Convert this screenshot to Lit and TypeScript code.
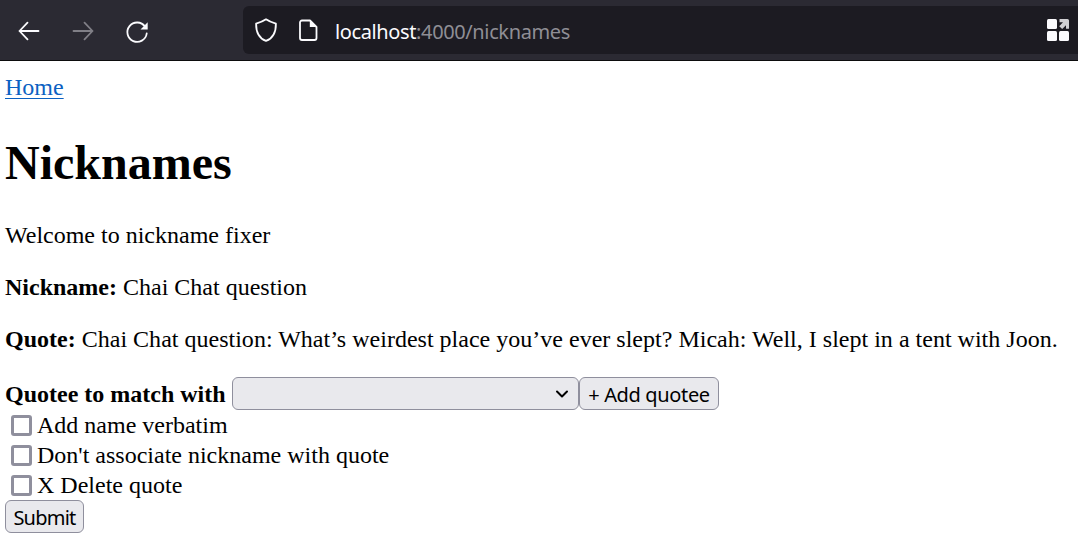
import { LitElement, html, css, svg } from "lit";
import { customElement } from "lit/decorators.js";

@customElement("browser-bar")
class BrowserBar extends LitElement {
  static styles = css`
    :host {
      display: flex;
      box-sizing: border-box;
      height: 61px;
      background: #2b2a33;
      border-bottom: 1px solid #0c0c0d;
    }
    svg {
      display: block;
      flex: none;
      overflow: visible;
      fill: none;
      stroke: #fbfbfe;
      stroke-width: 1.8;
      stroke-linecap: round;
      stroke-linejoin: round;
    }
    .nav {
      display: flex;
      width: 243px;
      box-sizing: border-box;
      flex: none;
      align-items: center;
      gap: 30px;
      padding: 2px 0 0 17px;
    }
    .muted {
      stroke: #807f87;
    }
    .solid {
      fill: #fbfbfe;
      stroke: none;
    }
    .soft {
      fill: #d0d0d3;
      stroke: none;
    }
    .field {
      display: flex;
      flex: 1;
      box-sizing: border-box;
      height: 48px;
      margin-top: 6px;
      padding: 0 9px 0 11px;
      align-items: center;
      background: #1c1b22;
      border-radius: 6px 0 0 6px;
    }
    .page {
      margin-left: 18px;
    }
    .url {
      flex: 1;
      margin-left: 15px;
      padding-top: 3px;
      font: 20px/28px "Noto Sans", sans-serif;
      letter-spacing: -0.38px;
      color: #8f8e95;
      white-space: nowrap;
    }
    .host {
      color: #fbfbfe;
    }
  `;

  render() {
    return html`
      <div class="nav">
        <svg width="24" height="24">${svg`<path d="M21.500 12H2.500M10.500 3.700L2.500 12l8 8.300"/>`}</svg>
        <svg class="muted" width="24" height="24">${svg`<path d="M2.500 12H21.500M13.500 3.700L21.500 12l-8 8.300"/>`}</svg>
        <svg width="24" height="24">${svg`<path d="M20 7.600A9.700 9.700 0 1 0 21.700 14.500"/><path class="solid" d="M22.700 3.200v7.200h-7.200z"/>`}</svg>
      </div>
      <div class="field">
        <svg width="24" height="24">${svg`<path d="M12 1.300c3 2.100 6.300 3.300 9.900 4.400C22 13.500 18.800 20.300 12 22.900 5.200 20.300 2 13.500 2.100 5.700 5.700 4.600 9 3.400 12 1.300z"/>`}</svg>
        <svg class="page" width="24" height="24">${svg`<path d="M14 2.500H6a2 2 0 0 0-2 2V20a2 2 0 0 0 2 2H18.500a2 2 0 0 0 2-2V9z"/><path class="solid" d="M13.800 2v7H21z"/>`}</svg>
        <div class="url"><span class="host">localhost</span>:4000/nicknames</div>
        <svg width="22" height="22">${svg`<g class="solid"><rect width="10" height="10" rx="1.500"/><rect y="12" width="10" height="10" rx="1.500"/><rect x="12" y="12" width="10" height="10" rx="1.500"/></g><path class="soft" d="M12.500 0H20.500Q22 0 22 1.500V9.700H19V6.200L15.200 10 12.200 7.200 16 3.200H12.500z"/>`}</svg>
      </div>
    `;
  }
}

@customElement("app-root")
class AppRoot extends LitElement {
  static styles = css`
    :host {
      display: block;
      min-height: 552px;
      background: #fff;
      color: #000;
      font: 24px/28px "Liberation Serif", serif;
    }
    main {
      padding: 12px 5px 0;
      white-space: nowrap;
    }
    .home {
      display: flex;
    }
    a {
      color: #0b61c2;
      text-decoration: underline;
      text-decoration-thickness: 1px;
      text-underline-offset: 3px;
    }
    h1 {
      margin: 34px 0 0;
      font-size: 48px;
      line-height: 56px;
    }
    p {
      margin: 0 0 24px;
    }
    .intro {
      margin-top: 30px;
    }
    .quote {
      letter-spacing: 0.01px;
    }
    .match {
      display: flex;
      height: 33px;
      line-height: 35px;
    }
    .match b {
      width: 227px;
      flex: none;
    }
    .select,
    button {
      box-sizing: border-box;
      height: 33px;
      margin: 0;
      border: 1px solid #8f8f9d;
      border-radius: 6px;
      background: #e9e9ed;
    }
    .select {
      display: flex;
      width: 347px;
      padding-right: 9px;
      align-items: center;
      justify-content: flex-end;
    }
    .select svg {
      fill: none;
      stroke: #000;
      stroke-width: 2;
      stroke-linecap: round;
      stroke-linejoin: round;
    }
    button {
      display: block;
      padding: 2px 0 0;
      font: 20px/28px "Noto Sans", sans-serif;
      color: #000;
      text-align: center;
    }
    .add {
      width: 140px;
      letter-spacing: -0.35px;
    }
    .submit {
      width: 79px;
      letter-spacing: -0.75px;
    }
    label {
      display: flex;
      height: 30px;
      align-items: center;
      padding-left: 6px;
      gap: 5px;
    }
    input {
      appearance: none;
      box-sizing: border-box;
      width: 21px;
      height: 21px;
      margin: 1px 0 0;
      border: 3px solid #8f8f9d;
      border-radius: 3px;
      background: #fff;
    }
  `;

  render() {
    const options = ["Add name verbatim", "Don't associate nickname with quote", "X Delete quote"];
    return html`
      <browser-bar></browser-bar>
      <main>
        <div class="home"><a href="#">Home</a></div>
        <h1>Nicknames</h1>
        <p class="intro">Welcome to nickname fixer</p>
        <p><b>Nickname:</b> Chai Chat question</p>
        <p class="quote"><b>Quote:</b> Chai Chat question: What’s weirdest place you’ve ever slept? Micah: Well, I slept in a tent with Joon.</p>
        <div class="match">
          <b>Quotee to match with</b>
          <div class="select" role="combobox" aria-label="Quotee">
            <svg width="14" height="10">${svg`<path d="M2 2.500l5 5 5-5"/>`}</svg>
          </div>
          <button class="add">+ Add quotee</button>
        </div>
        ${options.map((text) => html`<label><input type="checkbox" />${text}</label>`)}
        <button class="submit">Submit</button>
      </main>
    `;
  }
}
